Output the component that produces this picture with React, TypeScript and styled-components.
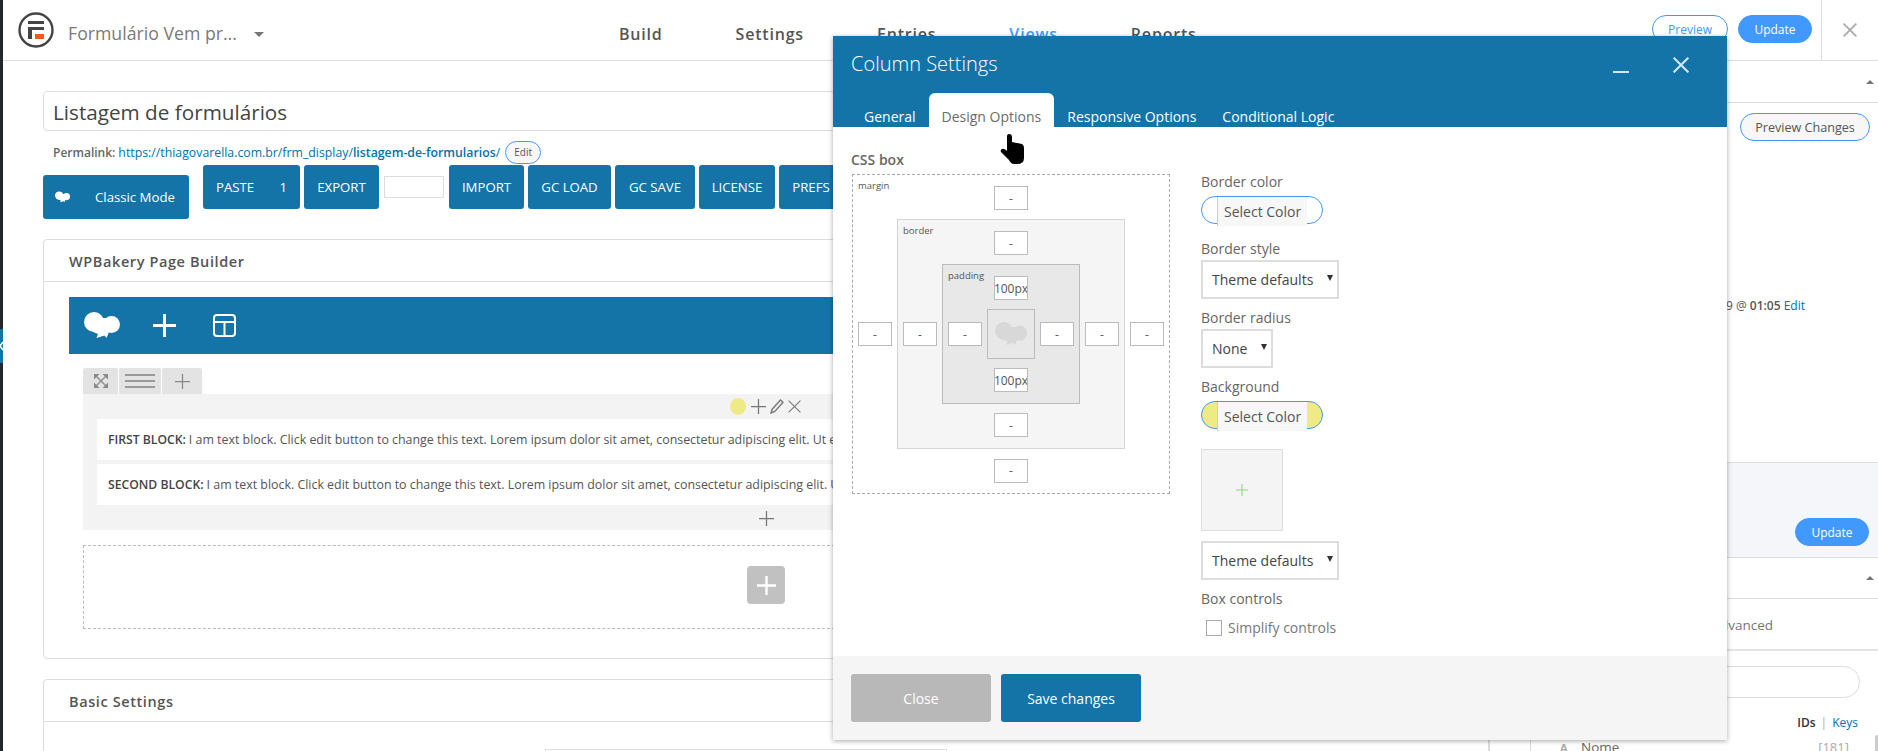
import React from "react";
import styled, { createGlobalStyle } from "styled-components";

const BLUE = "#1474a8";
const Global = createGlobalStyle`
  html, body { margin: 0; padding: 0; background: #fff; }
  body { font-family: "Open Sans", "Liberation Sans", sans-serif; color: #555; overflow: hidden; }
  #root { width: 1878px; height: 751px; overflow: hidden; }
`;

const Page = styled.div`
  position: relative; width: 1878px; height: 751px; overflow: hidden; display: flex; background: #fff;
`;
const AdminStrip = styled.div`
  width: 3px; flex: none; background: #23282d; display: flex; flex-direction: column; padding-top: 329px; box-sizing: border-box;
`;
const StripTab = styled.div` height: 34px; background: ${BLUE}; display: flex; align-items: center; `;
const Shell = styled.div` flex: 1; display: flex; flex-direction: column; min-width: 0; `;

const TopBar = styled.header`
  height: 61px; flex: none; box-sizing: border-box; border-bottom: 1px solid #ddd; display: flex; align-items: stretch;
`;
const Brand = styled.div` width: 616px; flex: none; box-sizing: border-box; padding-left: 15px; display: flex; align-items: center; `;
const FormName = styled.span` font-size: 17.7px; color: #7a7a7a; margin-left: 14px; padding-top: 5px; width: 186px; white-space: nowrap; `;
const Caret = styled.span<{ $up?: boolean; $size?: number; $drop?: number }>`
  width: 0; height: 0; display: inline-block; margin-top: ${p => p.$drop ?? 0}px;
  border-left: ${p => p.$size ?? 5}px solid transparent; border-right: ${p => p.$size ?? 5}px solid transparent;
  ${p => p.$up ? `border-bottom: ${p.$size ?? 5}px solid #72777c;` : `border-top: ${p.$size ?? 5}px solid #72777c;`}
`;
const Nav = styled.nav` display: flex; gap: 73px; align-items: center; padding-top: 7px; `;
const NavLink = styled.span<{ $active?: boolean }>`
  font-size: 16px; font-weight: 600; letter-spacing: 0.8px; color: ${p => p.$active ? "#4199fd" : "#555"};
`;
const TopActions = styled.div` margin-left: auto; display: flex; align-items: stretch; `;
const TopButtons = styled.div` display: flex; gap: 10px; align-items: center; padding: 0 9px 2px 0; `;
const Pill = styled.span<{ $primary?: boolean; $w: number }>`
  width: ${p => p.$w}px; height: 28px; box-sizing: border-box; border-radius: 14px; display: flex; align-items: center; justify-content: center;
  font-size: 12px; border: 1px solid #4199fd;
  background: ${p => p.$primary ? "#4199fd" : "#fff"}; color: ${p => p.$primary ? "#fff" : "#4199fd"};
`;
const CloseBox = styled.div` width: 56px; border-left: 1px solid #ddd; display: flex; align-items: center; justify-content: center; `;

const Body = styled.div` flex: 1; display: flex; min-height: 0; `;
const Main = styled.main` width: 1486px; flex: none; box-sizing: border-box; padding: 30px 0 0 40px; `;
const TitleBox = styled.div`
  height: 40px; box-sizing: border-box; border: 1px solid #ddd; border-radius: 4px; padding: 2px 9px 0;
  display: flex; align-items: center; font-size: 20.7px; color: #444;
`;
const PermaRow = styled.div` height: 24px; margin-top: 9px; display: flex; align-items: center; padding-left: 10px; font-size: 12.3px; color: #555; `;
const PermaLabel = styled.strong` font-weight: 600; font-size: 12px; margin-right: 3px; color: #666; `;
const PermaLink = styled.span` color: #0073aa; b { font-weight: 600; } `;
const EditChip = styled.span`
  width: 36px; height: 23px; margin-left: 5px; box-sizing: border-box; border: 1px solid #4199fd; border-radius: 12px; background: #f7f7f7;
  display: flex; align-items: center; justify-content: center; font-size: 10px; color: #555;
`;
const Toolbar = styled.div` display: flex; margin-top: 1px; height: 74px; align-items: flex-start; `;
const ClassicBtn = styled.div`
  width: 146px; height: 44px; margin-top: 10px; margin-right: 14px; background: ${BLUE}; border-radius: 3px; color: #fff; font-size: 13.2px;
  display: flex; align-items: center; box-sizing: border-box; padding-left: 12px; gap: 25px; flex: none;
`;
const ToolBtn = styled.div<{ $w: number; $between?: boolean }>`
  width: ${p => p.$w}px; height: 44px; margin-right: 4px; background: ${BLUE}; border-radius: 3px; color: #fff; font-size: 13.2px; flex: none;
  display: flex; align-items: center; box-sizing: border-box;
  justify-content: ${p => p.$between ? "space-between" : "center"}; padding: ${p => p.$between ? "0 13px" : "0"};
`;
const SmallInput = styled.div` width: 60px; height: 22px; margin: 11px 5px 0 1px; border: 1px solid #ddd; box-sizing: border-box; flex: none; `;

const Panel = styled.section<{ $gap?: number }>`
  border: 1px solid #ddd; border-radius: 4px; background: #fff; margin-top: ${p => p.$gap ?? 0}px;
`;
const PanelHead = styled.div`
  height: 42px; box-sizing: border-box; border-bottom: 1px solid #ddd; padding: 2px 0 0 25px; display: flex; align-items: center;
  font-size: 14.5px; font-weight: 600; letter-spacing: 0.6px; color: #555;
`;
const PanelBody = styled.div` padding: 15px 25px 29px; `;
const BuilderBar = styled.div` height: 57px; background: ${BLUE}; display: flex; align-items: center; padding-left: 15px; `;
const BarIcon = styled.span<{ $left: number }>` display: flex; margin-left: ${p => p.$left}px; `;
const RowWrap = styled.div` margin: 14px 14px 0; `;
const RowTabs = styled.div` display: flex; gap: 1px; height: 26px; `;
const RowTab = styled.div<{ $w: number }>`
  width: ${p => p.$w}px; background: #e3e3e3; display: flex; align-items: center; justify-content: center; border-radius: 2px 2px 0 0;
`;
const RowBody = styled.div` background: #f3f3f3; padding: 0 14px; height: 136px; box-sizing: border-box; `;
const ColControls = styled.div` height: 25px; display: flex; align-items: center; justify-content: center; gap: 3px; padding-right: 2px; `;
const Dot = styled.span` width: 16px; height: 17px; border-radius: 50%; background: #eeea85; margin-right: 2px; `;
const TextBlock = styled.div`
  height: 41px; margin-bottom: 4px; background: #fff; display: flex; align-items: center; padding-left: 11px;
  font-size: 12.4px; color: #555; white-space: nowrap; overflow: hidden; b { font-weight: 600; font-size: 12.2px; color: #444; margin-right: 3px; }
`;
const AddRow = styled.div` height: 19px; display: flex; justify-content: center; align-items: center; `;
const DropZone = styled.div`
  margin: 15px 14px 0; height: 84px; box-sizing: border-box; border: 1px dashed #bbb; padding-bottom: 4px; display: flex; align-items: center; justify-content: center;
`;
const AddBtn = styled.div` width: 38px; height: 38px; border-radius: 4px; background: #c1c1c1; display: flex; align-items: center; justify-content: center; `;
const FieldStub = styled.div` margin: 27px 0 0 501px; width: 400px; height: 30px; border: 1px solid #ddd; `;

const Sidebar = styled.aside` flex: 1; min-width: 0; border-left: 1px solid #ddd; display: flex; flex-direction: column; font-size: 13px; color: #555; `;
const SideHead = styled.div<{ $h: number }>`
  height: ${p => p.$h}px; flex: none; box-sizing: border-box; border-bottom: 1px solid #ddd; display: flex; align-items: center; justify-content: flex-end; padding-right: 4px;
`;
const PublishBox = styled.div`
  height: 360px; flex: none; box-sizing: border-box; border-bottom: 1px solid #ddd; padding: 10px 8px 0 0; display: flex; flex-direction: column; align-items: flex-end;
`;
const PreviewChanges = styled.div`
  width: 130px; height: 28px; box-sizing: border-box; border: 1px solid #4199fd; border-radius: 14px; background: #f7f7f7;
  font-size: 12.6px; color: #555; display: flex; align-items: center; justify-content: center;
`;
const DateLine = styled.div` margin: 156px 65px 0 0; font-size: 12px; color: #555; white-space: nowrap; b { font-weight: 600; } a { color: #0073aa; } `;
const ActionBox = styled.div`
  height: 95px; flex: none; box-sizing: border-box; background: #f5f6fa; border-bottom: 1px solid #ddd; padding: 55px 9px 0 0; display: flex; justify-content: flex-end;
`;
const TabsLine = styled.div`
  height: 52px; flex: none; box-sizing: border-box; border-bottom: 2px solid #e2e4e7; padding: 2px 105px 0 0; display: flex; align-items: center; justify-content: flex-end;
  font-size: 13.5px; color: #72777c;
`;
const FieldsArea = styled.div` flex: 1; display: flex; min-height: 0; `;
const FieldsRail = styled.div` width: 40px; flex: none; border-right: 1px solid #ddd; `;
const FieldsList = styled.div` flex: 1; padding: 15px 18px 0 0; position: relative; `;
const SearchBox = styled.div` height: 32px; box-sizing: border-box; border: 1px solid #ddd; border-radius: 16px; `;
const KeysRow = styled.div`
  display: flex; justify-content: flex-end; margin-top: 15px; padding-right: 2px; height: 18px; align-items: center; font-size: 12px; color: #0073aa;
  b { color: #333; font-weight: 600; } i { font-style: normal; margin: 0 5px; color: #aaa; }
`;
const FieldRow = styled.div` display: flex; align-items: center; margin-top: 7px; padding-left: 29px; font-size: 13.5px; color: #666; `;
const FieldGlyph = styled.span` width: 21px; font-size: 11px; font-weight: 700; color: #aaa; `;
const FieldId = styled.span` margin-left: auto; margin-right: 11px; color: #aaa; font-size: 13px; `;
const ScrollThumb = styled.div` position: absolute; right: 0; top: 84px; width: 3px; height: 40px; background: #ccc; border-radius: 2px 0 0 2px; `;

const Modal = styled.div`
  position: absolute; left: 833px; top: 36px; width: 894px; height: 704px; background: #fff; display: flex; flex-direction: column;
  box-shadow: 0 1px 5px rgba(0,0,0,.35);
`;
const ModalHead = styled.div` height: 91px; flex: none; background: ${BLUE}; display: flex; flex-direction: column; `;
const ModalTitleRow = styled.div` height: 57px; flex: none; display: flex; align-items: center; padding-left: 18px; color: #fff; font-size: 20px; font-weight: 300; `;
const HeadTitle = styled.span` margin-bottom: 2px; `;
const HeadIcons = styled.div` margin-left: auto; display: flex; align-items: center; gap: 44px; padding-right: 38px; `;
const ModalTabs = styled.div` display: flex; height: 34px; padding-left: 18px; `;
const ModalTab = styled.div<{ $active?: boolean }>`
  padding: 14px 13px 0; box-sizing: border-box; font-size: 14px; line-height: 20px; border-radius: 6px 6px 0 0; white-space: nowrap;
  background: ${p => p.$active ? "#fff" : "transparent"}; color: ${p => p.$active ? "#6b6b6b" : "#fff"};
`;
const ModalContent = styled.div` flex: 1; display: flex; padding: 0 18px; min-height: 0; `;
const BoxCol = styled.div` width: 319px; flex: none; padding-top: 24px; `;
const BoxTitle = styled.div` height: 16px; margin-bottom: 7px; font-size: 14px; font-weight: 600; color: #666; display: flex; align-items: center; `;
const Layer = styled.div<{ $kind: "margin" | "border" | "padding" }>`
  box-sizing: border-box; display: grid; justify-items: center; align-items: center;
  grid-template-columns: 44px 1fr 44px; grid-template-rows: 44px 1fr 44px;
  ${p => p.$kind === "margin" && "width: 318px; height: 320px; margin-left: 1px; border: 1px dashed #aaa; background: #fff; grid-template-rows: 44px 1fr 45px;"}
  ${p => p.$kind === "border" && "width: 228px; height: 230px; border: 1px solid #d4d4d4; background: #f5f5f5;"}
  ${p => p.$kind === "padding" && "width: 138px; height: 140px; border: 1px solid #bbb; background: #e8e8e8;"}
`;
const LayerName = styled.span` grid-area: 1 / 1; justify-self: start; align-self: start; margin: 4px 0 0 5px; font-size: 9.5px; color: #555; white-space: nowrap; `;
const Inp = styled.div<{ $area: string; $top?: boolean; $bottom?: boolean }>`
  grid-area: ${p => p.$area}; width: 34px; height: 24px; box-sizing: border-box; border: 1px solid #bbb; background: #fff;
  margin-top: ${p => p.$top ? 2 : 0}px; margin-bottom: ${p => p.$bottom ? 2 : 0}px;
  display: flex; align-items: center; justify-content: center; font-size: 12px; color: #555; overflow: hidden; white-space: nowrap;
`;
const Nested = styled.div` grid-area: 2 / 2; `;
const CoreBox = styled.div`
  grid-area: 2 / 2; width: 48px; height: 50px; box-sizing: border-box; border: 1px solid #bbb; background: #e8e8e8; display: flex; align-items: center; justify-content: center;
`;
const OptCol = styled.div` margin-left: 31px; padding-top: 46px; display: flex; flex-direction: column; align-items: flex-start; `;
const OptLabel = styled.div<{ $top?: number }>`
  height: 18px; box-sizing: border-box; padding-bottom: 2px; margin-top: ${p => p.$top ?? 0}px; font-size: 14px; color: #666; display: flex; align-items: center;
`;
const ColorBtn = styled.div<{ $swatch: string }>`
  width: 122px; height: 28px; margin-top: 5px; box-sizing: border-box; border: 1px solid #4199fd; border-radius: 14px; background: ${p => p.$swatch}; display: flex; overflow: visible;
`;
const ColorText = styled.div`
  width: 90px; height: 29px; margin-left: 15px; box-sizing: border-box; background: #f7f7f7; border-left: 1px solid #ccc; padding-left: 6px;
  display: flex; align-items: center; font-size: 14px; color: #555; white-space: nowrap;
`;
const Select = styled.div<{ $w: number; $top: number }>`
  width: ${p => p.$w}px; height: 39px; margin-top: ${p => p.$top}px; box-sizing: border-box; border: 2px solid #ddd; background: #fff;
  display: flex; align-items: center; justify-content: space-between; padding: 0 4px 0 9px; font-size: 14px; color: #444; white-space: nowrap;
`;
const SelectCaret = styled.span` width: 0; height: 0; border-left: 3.5px solid transparent; border-right: 3.5px solid transparent; border-top: 6px solid #333; margin-bottom: 3px; `;
const ImageBox = styled.div` width: 82px; height: 82px; margin-top: 20px; box-sizing: border-box; border: 1px solid #ddd; background: #f4f4f4; display: flex; align-items: center; justify-content: center; `;
const CheckRow = styled.div` display: flex; align-items: center; gap: 6px; margin: 11px 0 0 5px; height: 18px; font-size: 14px; color: #777; white-space: nowrap; `;
const CheckText = styled.span` margin-bottom: 2px; `;
const CheckBox = styled.span` width: 16px; height: 16px; box-sizing: border-box; border: 1px solid #aaa; background: #fff; `;
const ModalFoot = styled.div` height: 84px; flex: none; background: #f5f5f5; display: flex; gap: 10px; padding: 18px 18px 0; box-sizing: border-box; `;
const FootBtn = styled.div<{ $save?: boolean }>`
  width: 140px; height: 48px; border-radius: 3px; display: flex; align-items: center; justify-content: center; font-size: 14px; color: #fff;
  background: ${p => p.$save ? BLUE : "#b8b8b8"};
`;
const HandCursor = styled.svg` position: absolute; left: 1000px; top: 134px; `;

const Cloud = ({ w, h, fill }: { w: number; h: number; fill: string }) => (
  <svg width={w} height={h} viewBox="0 0 36 27" fill={fill}>
    <ellipse cx="10" cy="10" rx="10" ry="10" />
    <circle cx="27.5" cy="12.5" r="8.5" />
    <path d="M8 6h20v14h-3l-2.5 6-2-2.5-8 2.5 1.5-4-5-2z" />
  </svg>
);
const Plus = ({ size, color, sw }: { size: number; color: string; sw: number }) => (
  <svg width={size} height={size} viewBox="0 0 24 24" stroke={color} strokeWidth={sw} fill="none">
    <path d="M12 0v24M0 12h24" />
  </svg>
);
const Cross = ({ size, color, sw }: { size: number; color: string; sw: number }) => (
  <svg width={size} height={size} viewBox="0 0 24 24" stroke={color} strokeWidth={sw} fill="none">
    <path d="M1 1l22 22M23 1L1 23" />
  </svg>
);
const Logo = () => (
  <svg width="36" height="36" viewBox="0 0 36 36">
    <circle cx="18" cy="18" r="16.5" fill="none" stroke="#444" strokeWidth="2.4" />
    <path d="M10 9h16v3H10zM10 15h16v3H14v9h-4z" fill="#444" />
    <rect x="17" y="22" width="9" height="5" fill="#f15a24" />
  </svg>
);
const LayoutIcon = () => (
  <svg width="23" height="23" viewBox="0 0 23 23" fill="none" stroke="#fff" strokeWidth="2">
    <rect x="1" y="1" width="21" height="21" rx="3" />
    <path d="M1 8h21M11.5 8v14" />
  </svg>
);
const ExpandIcon = () => (
  <svg width="14" height="14" viewBox="0 0 14 14" fill="#8a8a8a" stroke="#8a8a8a">
    <path d="M0 0h5.5L0 5.5zM14 0v5.5L8.5 0zM0 14V8.5L5.5 14zM14 14H8.5L14 8.5z" stroke="none" />
    <path d="M2 2l10 10M12 2L2 12" strokeWidth="1.3" fill="none" />
  </svg>
);
const MenuIcon = () => (
  <svg width="30" height="14" viewBox="0 0 30 14" stroke="#999" strokeWidth="2"><path d="M0 1h30M0 7h30M0 13h30" /></svg>
);
const Pen = () => (
  <svg width="14" height="15" viewBox="0 0 14 15" fill="none" stroke="#777" strokeWidth="1.4">
    <path d="M10.5 1L13 3.2 4.8 12.5 1 14l1.2-3.8z" />
  </svg>
);
const StripArrow = () => (
  <svg width="3" height="10" viewBox="0 0 3 10" fill="none" stroke="#fff" strokeWidth="1.5"><path d="M3 1L0 5l3 4" /></svg>
);

const LayerInputs = ({ v }: { v: string }) => (
  <>
    <Inp $area="1 / 2" $top>{v}</Inp>
    <Inp $area="2 / 1">-</Inp>
    <Inp $area="2 / 3">-</Inp>
    <Inp $area="3 / 2" $bottom>{v}</Inp>
  </>
);

const tools: [string, number][] = [["IMPORT", 75], ["GC LOAD", 83], ["GC SAVE", 80], ["LICENSE", 76], ["PREFS", 64]];

export default function App() {
  return (
    <Page>
      <Global />
      <AdminStrip><StripTab><StripArrow /></StripTab></AdminStrip>
      <Shell>
        <TopBar>
          <Brand>
            <Logo />
            <FormName>Formulário Vem pr...</FormName>
            <Caret $size={5} $drop={8} />
          </Brand>
          <Nav>
            <NavLink>Build</NavLink>
            <NavLink>Settings</NavLink>
            <NavLink>Entries</NavLink>
            <NavLink $active>Views</NavLink>
            <NavLink>Reports</NavLink>
          </Nav>
          <TopActions>
            <TopButtons>
              <Pill $w={76}>Preview</Pill>
              <Pill $w={74} $primary>Update</Pill>
            </TopButtons>
            <CloseBox><Cross size={14} color="#aaa" sw={3} /></CloseBox>
          </TopActions>
        </TopBar>
        <Body>
          <Main>
            <TitleBox>Listagem de formulários</TitleBox>
            <PermaRow>
              <PermaLabel>Permalink:</PermaLabel>
              <PermaLink>https://thiagovarella.com.br/frm_display/<b>listagem-de-formularios</b>/</PermaLink>
              <EditChip>Edit</EditChip>
            </PermaRow>
            <Toolbar>
              <ClassicBtn><Cloud w={15} h={12} fill="#fff" />Classic Mode</ClassicBtn>
              <ToolBtn $w={97} $between><span>PASTE</span><span>1</span></ToolBtn>
              <ToolBtn $w={75}>EXPORT</ToolBtn>
              <SmallInput />
              {tools.map(([t, w]) => <ToolBtn key={t} $w={w}>{t}</ToolBtn>)}
            </Toolbar>
            <Panel>
              <PanelHead>WPBakery Page Builder</PanelHead>
              <PanelBody>
                <BuilderBar>
                  <Cloud w={36} h={27} fill="#fff" />
                  <BarIcon $left={33}><Plus size={23} color="#fff" sw={3} /></BarIcon>
                  <BarIcon $left={37}><LayoutIcon /></BarIcon>
                </BuilderBar>
                <RowWrap>
                  <RowTabs>
                    <RowTab $w={35}><ExpandIcon /></RowTab>
                    <RowTab $w={42}><MenuIcon /></RowTab>
                    <RowTab $w={40}><Plus size={15} color="#888" sw={2} /></RowTab>
                  </RowTabs>
                  <RowBody>
                    <ColControls>
                      <Dot />
                      <Plus size={15} color="#777" sw={2} />
                      <BarIcon $left={1}><Pen /></BarIcon>
                      <BarIcon $left={1}><Cross size={13} color="#777" sw={2} /></BarIcon>
                    </ColControls>
                    <TextBlock><b>FIRST BLOCK:</b> I am text block. Click edit button to change this text. Lorem ipsum dolor sit amet, consectetur adipiscing elit. Ut elit tellus, luctus nec ullamcorper mattis.</TextBlock>
                    <TextBlock><b>SECOND BLOCK:</b> I am text block. Click edit button to change this text. Lorem ipsum dolor sit amet, consectetur adipiscing elit. Ut elit tellus, luctus nec ullamcorper mattis.</TextBlock>
                    <AddRow><Plus size={15} color="#777" sw={2} /></AddRow>
                  </RowBody>
                </RowWrap>
                <DropZone><AddBtn><Plus size={19} color="#fff" sw={3} /></AddBtn></DropZone>
              </PanelBody>
            </Panel>
            <Panel $gap={20}>
              <PanelHead>Basic Settings</PanelHead>
              <FieldStub />
            </Panel>
          </Main>
          <Sidebar>
            <SideHead $h={42}><Caret $up $size={4} /></SideHead>
            <PublishBox>
              <PreviewChanges>Preview Changes</PreviewChanges>
              <DateLine>2019 @ <b>01:05</b> <a>Edit</a></DateLine>
            </PublishBox>
            <ActionBox><Pill $w={74} $primary>Update</Pill></ActionBox>
            <SideHead $h={41}><Caret $up $size={4} /></SideHead>
            <TabsLine>Advanced</TabsLine>
            <FieldsArea>
              <FieldsRail />
              <FieldsList>
                <SearchBox />
                <KeysRow><b>IDs</b><i>|</i>Keys</KeysRow>
                <FieldRow><FieldGlyph>A</FieldGlyph>Nome<FieldId>[181]</FieldId></FieldRow>
                <ScrollThumb />
              </FieldsList>
            </FieldsArea>
          </Sidebar>
        </Body>
      </Shell>

      <Modal>
        <ModalHead>
          <ModalTitleRow>
            <HeadTitle>Column Settings</HeadTitle>
            <HeadIcons>
              <svg width="16" height="16" viewBox="0 0 16 16" stroke="#d5e8f2" strokeWidth="2"><path d="M0 15h16" /></svg>
              <Cross size={16} color="#d5e8f2" sw={3} />
            </HeadIcons>
          </ModalTitleRow>
          <ModalTabs>
            <ModalTab>General</ModalTab>
            <ModalTab $active>Design Options</ModalTab>
            <ModalTab>Responsive Options</ModalTab>
            <ModalTab>Conditional Logic</ModalTab>
          </ModalTabs>
        </ModalHead>
        <ModalContent>
          <BoxCol>
            <BoxTitle>CSS box</BoxTitle>
            <Layer $kind="margin">
              <LayerName>margin</LayerName>
              <LayerInputs v="-" />
              <Nested>
                <Layer $kind="border">
                  <LayerName>border</LayerName>
                  <LayerInputs v="-" />
                  <Nested>
                    <Layer $kind="padding">
                      <LayerName>padding</LayerName>
                      <LayerInputs v="100px" />
                      <CoreBox><Cloud w={32} h={24} fill="#d8d8d8" /></CoreBox>
                    </Layer>
                  </Nested>
                </Layer>
              </Nested>
            </Layer>
          </BoxCol>
          <OptCol>
            <OptLabel>Border color</OptLabel>
            <ColorBtn $swatch="#fff"><ColorText>Select Color</ColorText></ColorBtn>
            <OptLabel $top={16}>Border style</OptLabel>
            <Select $w={138} $top={2}>Theme defaults<SelectCaret /></Select>
            <OptLabel $top={10}>Border radius</OptLabel>
            <Select $w={72} $top={2}>None<SelectCaret /></Select>
            <OptLabel $top={10}>Background</OptLabel>
            <ColorBtn $swatch="#eeea85"><ColorText>Select Color</ColorText></ColorBtn>
            <ImageBox><Plus size={12} color="#8cd67a" sw={2} /></ImageBox>
            <Select $w={138} $top={10}>Theme defaults<SelectCaret /></Select>
            <OptLabel $top={10}>Box controls</OptLabel>
            <CheckRow><CheckBox /><CheckText>Simplify controls</CheckText></CheckRow>
          </OptCol>
        </ModalContent>
        <ModalFoot>
          <FootBtn>Close</FootBtn>
          <FootBtn $save>Save changes</FootBtn>
        </ModalFoot>
      </Modal>
      <HandCursor width="24" height="30" viewBox="0 0 24 30" fill="#000">
        <path d="M7 2Q7 0 9 0Q12 0 12 3L12 8L22 10Q24 11 24 14L24 24Q24 30 17 30L14 30Q11 30 9 26L1 18Q0 16 2 15Q4 14 7 17Z" />
      </HandCursor>
    </Page>
  );
}
